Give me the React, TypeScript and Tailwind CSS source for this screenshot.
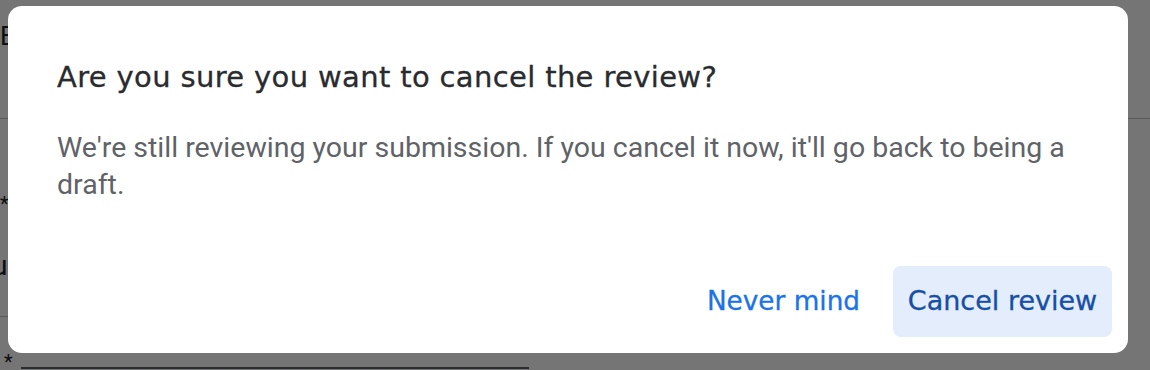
import React from "react";

export default function App() {
  return (
    <div className="relative w-[1150px] h-[370px] overflow-hidden bg-white" style={{ fontFamily: "Roboto, 'Noto Sans', sans-serif" }}>
      {/* page behind the dialog */}
      <div className="flex flex-col text-[#202124]">
        <div className="h-[24px]" />
        <div className="h-[24px] text-[26px] leading-[24px]">E</div>
        <div className="h-[70px]" />
        <div className="h-px bg-[#c4c4c4] w-full" />
        <div className="h-[75px]" />
        <div className="text-[20px] leading-[20px]">*</div>
        <div className="h-[38px]" />
        <div className="text-[28px] leading-[28px] -ml-[8px]">u</div>
        <div className="h-[36px]" />
        <div className="h-px bg-[#c4c4c4] w-[300px]" />
        <div className="h-[38px]" />
        <div className="flex items-end gap-[8px]">
          <span className="text-[20px] leading-[14px] pl-[4px]">*</span>
          <div className="w-[508px] h-[2px] bg-[#5f6368]" />
        </div>
      </div>
      {/* backdrop */}
      <div className="absolute inset-0 bg-[rgba(0,0,0,0.54)]" />
      {/* dialog */}
      <div className="absolute left-[8px] top-[6px] w-[1120px] h-[347px] bg-white rounded-[14px] flex flex-col">
        <div className="pl-[49px] pr-[48px] pt-[53px] flex flex-col">
          <h2 className="text-[29px] leading-[36px] tracking-[0.35px] text-[#2a2b2e] font-normal [-webkit-text-stroke:0.3px_#2a2b2e]" style={{ fontFamily: "'DejaVu Sans', sans-serif" }}>
            Are you sure you want to cancel the review?
          </h2>
          <p className="mt-[34px] text-[28.5px] leading-[37px] text-[#5f6368]" style={{ fontFamily: "Roboto, sans-serif" }}>
            We're still reviewing your submission. If you cancel it now, it'll go back to being a draft.
          </p>
        </div>
        <div className="mt-auto flex justify-end items-center gap-[17px] p-[16px]" style={{ fontFamily: "'DejaVu Sans', sans-serif" }}>
          <button className="h-[71px] px-[16px] rounded-[8px] text-[26.3px] text-[#1a73e8] [-webkit-text-stroke:0.3px_#1a73e8]">Never mind</button>
          <button className="h-[71px] w-[219px] rounded-[8px] bg-[#e3edfb] text-[27px] text-[#174ea6] [-webkit-text-stroke:0.3px_#174ea6]">Cancel review</button>
        </div>
      </div>
    </div>
  );
}
